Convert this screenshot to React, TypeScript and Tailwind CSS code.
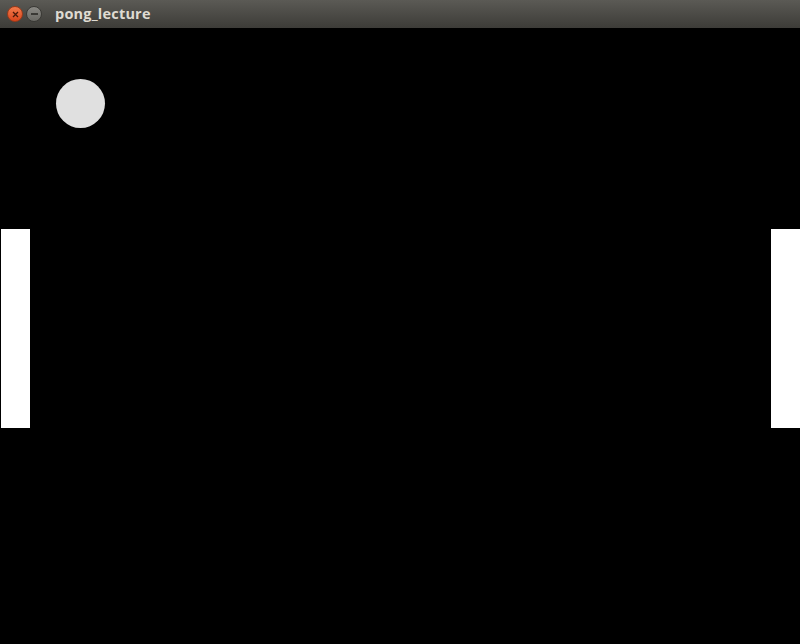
import React from "react";

const TitleBar: React.FC<{ title: string }> = ({ title }) => (
  <div className="flex h-[28px] items-center bg-gradient-to-b from-[#5b5a55] to-[#3d3c38] pl-[7px] font-['Open_Sans',sans-serif]">
    <div className="flex items-center gap-[3px]">
      <div className="flex h-[16px] w-[16px] items-center justify-center rounded-full border border-[#9a3a1a] bg-gradient-to-b from-[#f37a4a] to-[#d9441a]">
        <svg width="7" height="7" viewBox="0 0 7 7">
          <path d="M1 1 L6 6 M6 1 L1 6" stroke="#4a1a0a" strokeWidth="1.3" />
        </svg>
      </div>
      <div className="flex h-[16px] w-[16px] items-center justify-center rounded-full border border-[#3a3935] bg-gradient-to-b from-[#8a8984] to-[#6a6964]">
        <div className="h-[1.5px] w-[7px] bg-[#3a3935]" />
      </div>
    </div>
    <span className="ml-[13px] text-[14.5px] font-bold leading-none tracking-[0.2px] text-[#dfdbd2]">{title}</span>
  </div>
);

export default function App() {
  return (
    <div className="flex h-[644px] w-[800px] flex-col overflow-hidden bg-black">
      <TitleBar title="pong_lecture" />
      <div className="relative flex-1 bg-black">
        <div className="absolute left-[56px] top-[51px] h-[49px] w-[49px] rounded-full bg-[#e0e0e0]" />
        <div className="absolute left-[1px] top-[201px] h-[199px] w-[29px] bg-white" />
        <div className="absolute right-0 top-[201px] h-[199px] w-[29px] bg-white" />
      </div>
    </div>
  );
}
